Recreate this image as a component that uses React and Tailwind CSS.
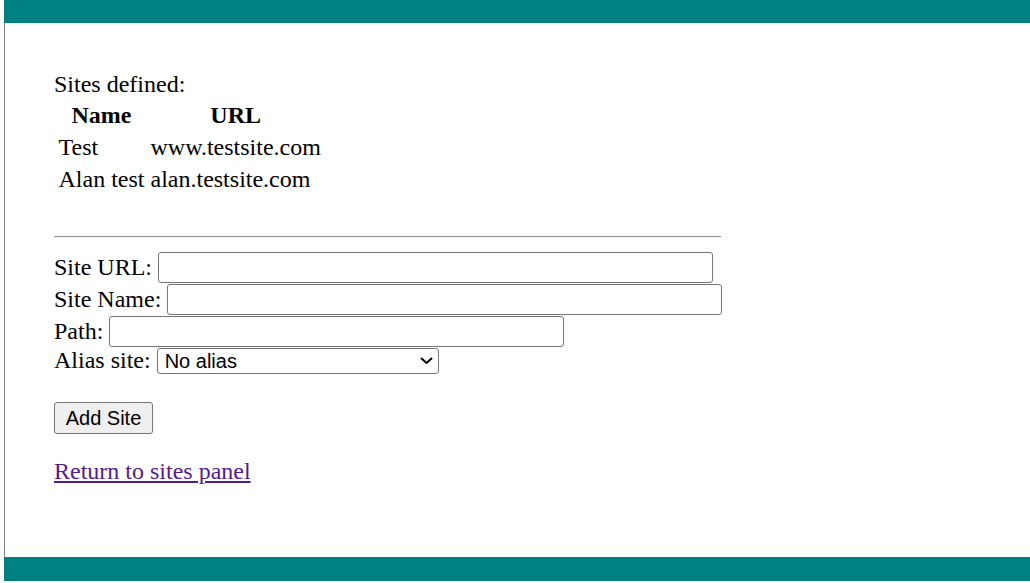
export default function App() {
  const sites = [
    { name: "Test", url: "www.testsite.com" },
    { name: "Alan test", url: "alan.testsite.com" },
  ];

  return (
    <div className="w-[1030px] h-[583px] bg-white pl-[4px] font-['Liberation_Serif',serif] text-[24px] leading-[27px] text-black">
      <div className="h-[23px] bg-[#008080]" />

      <div className="h-[534px] border-l border-[#808080] pl-[49px] pt-[48px]">
        <div className="w-[667px]">
          <p>Sites defined:</p>

          <table className="mt-[1px] border-separate border-spacing-x-[3px] border-spacing-y-0">
            <thead>
              <tr>
                <th className="h-[32px] px-[1.5px] text-center font-bold">Name</th>
                <th className="h-[32px] px-[1.5px] text-center font-bold">URL</th>
              </tr>
            </thead>
            <tbody>
              {sites.map((s) => (
                <tr key={s.name}>
                  <td className="h-[32px] px-[1.5px] whitespace-nowrap">{s.name}</td>
                  <td className="h-[32px] px-[1.5px] whitespace-nowrap">{s.url}</td>
                </tr>
              ))}
            </tbody>
          </table>

          <hr className="mt-[41px] border-t border-b border-t-[#9a9a9a] border-b-[#eeeeee]" />

          <div className="mt-[13px]">
            <div className="flex h-[32px] items-center gap-[6px]">
              <label className="shrink-0 whitespace-nowrap">Site URL:</label>
              <input type="text" className="h-[31px] w-[555px] shrink-0 rounded-[3px] border border-[#767676] bg-white" />
            </div>
            <div className="flex h-[32px] items-center gap-[6px]">
              <label className="shrink-0 whitespace-nowrap">Site Name:</label>
              <input type="text" className="h-[31px] w-[555px] shrink-0 rounded-[3px] border border-[#767676] bg-white" />
            </div>
            <div className="flex h-[32px] items-center gap-[6px]">
              <label className="shrink-0 whitespace-nowrap">Path:</label>
              <input type="text" className="h-[31px] w-[455px] shrink-0 rounded-[3px] border border-[#767676] bg-white" />
            </div>
            <div className="flex h-[27px] items-center gap-[6px]">
              <label className="shrink-0 whitespace-nowrap">Alias site:</label>
              <div className="relative shrink-0">
                <select className="h-[26px] w-[282px] appearance-none rounded-[3px] border border-[#767676] bg-white pl-[7px] font-['Liberation_Sans',Arial,sans-serif] text-[20px] leading-[24px]">
                  <option>No alias</option>
                </select>
                <svg
                  className="pointer-events-none absolute right-[6px] top-[10px]"
                  width="13"
                  height="7"
                  viewBox="0 0 13 7"
                  fill="none"
                >
                  <path d="M1 1 L6.5 6 L12 1" stroke="#000" strokeWidth="2" />
                </svg>
              </div>
            </div>
          </div>

          <button className="mt-[28px] h-[32px] w-[99px] rounded-[3px] border border-[#767676] bg-[#efefef] font-['Liberation_Sans',Arial,sans-serif] text-[20px] leading-[24px]">
            Add Site
          </button>

          <p className="mt-[24px]">
            <a href="#" className="text-[#551a8b] underline">
              Return to sites panel
            </a>
          </p>
        </div>
      </div>

      <div className="h-[24px] bg-[#008080]" />
    </div>
  );
}
